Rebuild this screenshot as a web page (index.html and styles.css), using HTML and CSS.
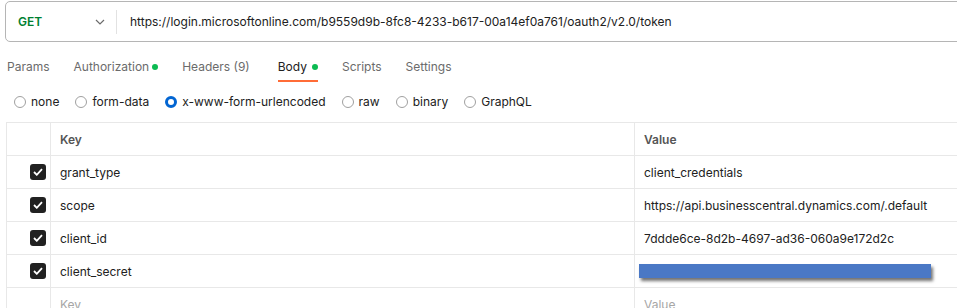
FILE: index.html
```html
<!DOCTYPE html>
<html>
<head>
	<title>Request</title>
	<link rel="stylesheet" href="styles.css">
</head>
<body>
	<div class="urlbar">
		<div class="method">
			<span class="get">GET</span>
			<svg class="chevron" width="10" height="6" viewBox="0 0 10 6"><path d="M1 1l4 4 4-4" fill="none" stroke="#6b6b6b" stroke-width="1.2"/></svg>
		</div>
		<div class="divider"></div>
		<div class="url">https://login.microsoftonline.com/b9559d9b-8fc8-4233-b617-00a14ef0a761/oauth2/v2.0/token</div>
	</div>

	<div class="tabs">
		<span class="tab">Params</span>
		<span class="tab">Authorization<i class="dot near"></i></span>
		<span class="tab wide">Headers (9)</span>
		<span class="tab active">Body<i class="dot"></i></span>
		<span class="tab">Scripts</span>
		<span class="tab">Settings</span>
	</div>

	<div class="bodytypes">
		<label class="radio"><i class="circle"></i>none</label>
		<label class="radio"><i class="circle"></i>form-data</label>
		<label class="radio"><i class="circle on"></i>x-www-form-urlencoded</label>
		<label class="radio"><i class="circle"></i>raw</label>
		<label class="radio"><i class="circle"></i>binary</label>
		<label class="radio"><i class="circle"></i>GraphQL</label>
	</div>

	<table class="params">
		<tr class="head">
			<td class="check"></td>
			<td>Key</td>
			<td>Value</td>
		</tr>
		<tr>
			<td class="check"><span class="box"><svg width="10" height="8" viewBox="0 0 10 8"><path d="M1 4l2.8 2.8L9 1.2" fill="none" stroke="#fff" stroke-width="1.8"/></svg></span></td>
			<td>grant_type</td>
			<td>client_credentials</td>
		</tr>
		<tr>
			<td class="check"><span class="box"><svg width="10" height="8" viewBox="0 0 10 8"><path d="M1 4l2.8 2.8L9 1.2" fill="none" stroke="#fff" stroke-width="1.8"/></svg></span></td>
			<td>scope</td>
			<td>https://api.businesscentral.dynamics.com/.default</td>
		</tr>
		<tr>
			<td class="check"><span class="box"><svg width="10" height="8" viewBox="0 0 10 8"><path d="M1 4l2.8 2.8L9 1.2" fill="none" stroke="#fff" stroke-width="1.8"/></svg></span></td>
			<td>client_id</td>
			<td>7ddde6ce-8d2b-4697-ad36-060a9e172d2c</td>
		</tr>
		<tr>
			<td class="check"><span class="box"><svg width="10" height="8" viewBox="0 0 10 8"><path d="M1 4l2.8 2.8L9 1.2" fill="none" stroke="#fff" stroke-width="1.8"/></svg></span></td>
			<td>client_secret</td>
			<td class="secret"><span class="redact"></span></td>
		</tr>
		<tr class="empty">
			<td class="check"></td>
			<td>Key</td>
			<td>Value</td>
		</tr>
	</table>
</body>
</html>
```

FILE: styles.css
```css
body {
	margin: 0;
	background: #fff;
	font-family: Inter, "Noto Sans", sans-serif;
	font-size: 12px;
	color: #212121;
	overflow: hidden;
}

.urlbar {
	display: flex;
	align-items: center;
	margin: 1px 0 0 5px;
	width: 970px;
	height: 39px;
	border: 1px solid #b5b5b5;
	border-radius: 5px;
}
.method {
	display: flex;
	align-items: center;
	width: 98px;
	padding-left: 12px;
}
.get {
	color: #007f31;
	font-weight: 600;
	width: 77px;
}
.chevron { display: block; }
.divider {
	width: 1px;
	height: 24px;
	background: #e2e2e2;
}
.url {
	padding-left: 13px;
	white-space: nowrap;
}

.tabs {
	display: flex;
	gap: 24px;
	padding-left: 7px;
	height: 40px;
}
.tab {
	display: flex;
	align-items: center;
	color: #6b6b6b;
	padding-top: 10px;
	border-bottom: 2px solid transparent;
	box-sizing: border-box;
}
.tab.wide { margin-right: 4px; }
.tab.active {
	color: #212121;
	border-bottom-color: #ff6c37;
}
.dot {
	width: 6px;
	height: 6px;
	border-radius: 50%;
	background: #0cbb52;
	margin-left: 5px;
	margin-top: 1px;
}
.dot.near { margin-left: 3px; }

.bodytypes {
	display: flex;
	align-items: center;
	height: 39px;
	padding-left: 14px;
	gap: 16px;
	padding-bottom: 1px;
}
.radio {
	display: flex;
	align-items: center;
	gap: 5px;
}
.circle {
	width: 10px;
	height: 10px;
	border: 1px solid #a0a0a0;
	border-radius: 50%;
}
.circle.on {
	width: 6px;
	height: 6px;
	border: 3px solid #0265d2;
}

.params {
	border-collapse: collapse;
	margin-left: 6px;
	width: 980px;
}
.params td {
	height: 32px;
	border: 1px solid #e8e8e8;
	padding: 0 9px;
	white-space: nowrap;
}
.params .check {
	width: 44px;
	padding: 0 4px 0 0;
	box-sizing: border-box;
	text-align: right;
}
.params td:nth-child(2) { width: 565px; }
.head td {
	font-weight: 600;
	color: #555;
}
.empty td { color: #a6a6a6; }

.box {
	display: inline-flex;
	align-items: center;
	justify-content: center;
	width: 16px;
	height: 16px;
	border-radius: 3px;
	background: #212121;
	vertical-align: middle;
}

.secret { position: relative; }
.redact {
	position: absolute;
	left: 4px;
	top: 9px;
	width: 292px;
	height: 14px;
	background: #4a78c5;
	box-shadow: 2px 3px 3px rgba(0, 0, 0, 0.55);
}
```
